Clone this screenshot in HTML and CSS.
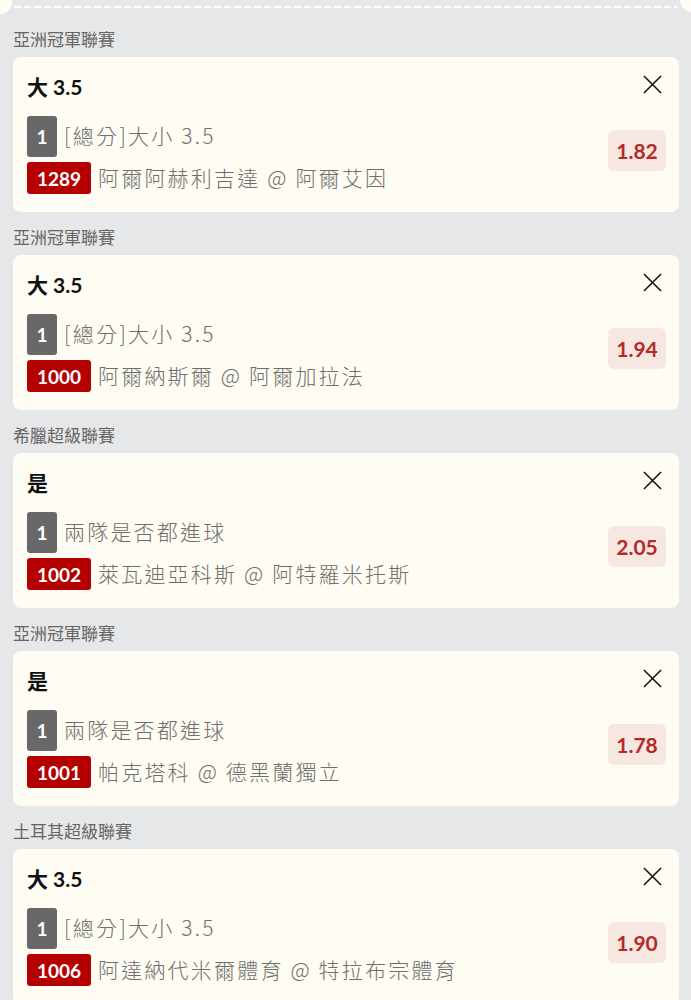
FILE: index.html
```html
<!DOCTYPE html>
<html lang="zh-Hant">
<head>
  <meta charset="UTF-8">
  <title>投注單</title>
  <link rel="stylesheet" href="styles.css">
</head>
<body>
  <div class="slip">
    <div class="tear"><div class="tear-line"></div></div>

    <section class="bet">
      <div class="league">亞洲冠軍聯賽</div>
      <div class="card">
        <div class="card-head">
          <span class="pick">大 3.5</span>
          <svg class="close" viewBox="0 0 20 20"><path d="M1 1L19 19M19 1L1 19"/></svg>
        </div>
        <div class="card-body">
          <div class="lines">
            <div class="line"><span class="badge badge-type">1</span><span class="text">[總分]大小 3.5</span></div>
            <div class="line"><span class="badge badge-code">1289</span><span class="text">阿爾阿赫利吉達 @ 阿爾艾因</span></div>
          </div>
          <div class="odds">1.82</div>
        </div>
      </div>
    </section>

    <section class="bet">
      <div class="league">亞洲冠軍聯賽</div>
      <div class="card">
        <div class="card-head">
          <span class="pick">大 3.5</span>
          <svg class="close" viewBox="0 0 20 20"><path d="M1 1L19 19M19 1L1 19"/></svg>
        </div>
        <div class="card-body">
          <div class="lines">
            <div class="line"><span class="badge badge-type">1</span><span class="text">[總分]大小 3.5</span></div>
            <div class="line"><span class="badge badge-code">1000</span><span class="text">阿爾納斯爾 @ 阿爾加拉法</span></div>
          </div>
          <div class="odds">1.94</div>
        </div>
      </div>
    </section>

    <section class="bet">
      <div class="league">希臘超級聯賽</div>
      <div class="card">
        <div class="card-head">
          <span class="pick">是</span>
          <svg class="close" viewBox="0 0 20 20"><path d="M1 1L19 19M19 1L1 19"/></svg>
        </div>
        <div class="card-body">
          <div class="lines">
            <div class="line"><span class="badge badge-type">1</span><span class="text">兩隊是否都進球</span></div>
            <div class="line"><span class="badge badge-code">1002</span><span class="text">萊瓦迪亞科斯 @ 阿特羅米托斯</span></div>
          </div>
          <div class="odds">2.05</div>
        </div>
      </div>
    </section>

    <section class="bet">
      <div class="league">亞洲冠軍聯賽</div>
      <div class="card">
        <div class="card-head">
          <span class="pick">是</span>
          <svg class="close" viewBox="0 0 20 20"><path d="M1 1L19 19M19 1L1 19"/></svg>
        </div>
        <div class="card-body">
          <div class="lines">
            <div class="line"><span class="badge badge-type">1</span><span class="text">兩隊是否都進球</span></div>
            <div class="line"><span class="badge badge-code">1001</span><span class="text">帕克塔科 @ 德黑蘭獨立</span></div>
          </div>
          <div class="odds">1.78</div>
        </div>
      </div>
    </section>

    <section class="bet">
      <div class="league">土耳其超級聯賽</div>
      <div class="card">
        <div class="card-head">
          <span class="pick">大 3.5</span>
          <svg class="close" viewBox="0 0 20 20"><path d="M1 1L19 19M19 1L1 19"/></svg>
        </div>
        <div class="card-body">
          <div class="lines">
            <div class="line"><span class="badge badge-type">1</span><span class="text">[總分]大小 3.5</span></div>
            <div class="line"><span class="badge badge-code">1006</span><span class="text">阿達納代米爾體育 @ 特拉布宗體育</span></div>
          </div>
          <div class="odds">1.90</div>
        </div>
      </div>
    </section>
  </div>
</body>
</html>
```

FILE: styles.css
```css
body {
  margin: 0;
  background: #e6e7e9;
  font-family: "Lato", "Noto Sans CJK TC", sans-serif;
  color: #111;
}

.slip {
  padding: 0 12px 0 13px;
}

.tear {
  position: relative;
  height: 15px;
  margin: 0 -12px 0 -13px;
}

.tear::before,
.tear::after {
  content: "";
  position: absolute;
  width: 24px;
  height: 24px;
  border-radius: 50%;
  background: #fefcf3;
}

.tear::before {
  left: -12px;
  top: -10px;
}

.tear::after {
  right: -13px;
  top: -12px;
}

.tear-line {
  margin: 0 14px;
  position: relative;
  top: 6px;
  height: 2px;
  background: repeating-linear-gradient(to right, #fff 0 7px, transparent 7px 10px);
}

.league {
  margin: 15px 0 6px;
  font-size: 17px;
  line-height: 22px;
  color: #666;
}

.bet:first-of-type .league {
  margin-top: 14px;
}

.card {
  background: #fefcf3;
  border-radius: 8px;
  padding: 16px 13px 18px 14px;
}

.card-head {
  display: flex;
  justify-content: space-between;
  align-items: flex-start;
}

.pick {
  font-size: 21px;
  font-weight: 700;
  line-height: 28px;
}

.close {
  width: 19px;
  height: 19px;
  margin: 2px 4px 0 0;
  fill: none;
  stroke: #111;
  stroke-width: 1.6;
}

.card-body {
  display: flex;
  justify-content: space-between;
  align-items: center;
  margin-top: 15px;
}

.lines {
  display: flex;
  flex-direction: column;
  gap: 5px;
}

.line {
  display: flex;
  align-items: center;
  gap: 7px;
}

.badge {
  display: flex;
  align-items: center;
  justify-content: center;
  border-radius: 3px;
  color: #fff;
  font-size: 19px;
  font-weight: 700;
}

.badge-type {
  width: 30px;
  height: 41px;
  background: #686868;
}

.badge-code {
  width: 64px;
  height: 32px;
  background: #b40000;
}

.text {
  font-family: "Noto Sans CJK TC", sans-serif;
  font-size: 21px;
  line-height: 28px;
  font-weight: 300;
  letter-spacing: 2.2px;
  color: #6e6e6e;
  margin-top: -3px;
}

.odds {
  width: 58px;
  height: 41px;
  margin-bottom: 9px;
  display: flex;
  align-items: center;
  justify-content: center;
  background: #f7e7e1;
  border-radius: 6px;
  color: #b42a2a;
  font-size: 21px;
  font-weight: 700;
}
```
